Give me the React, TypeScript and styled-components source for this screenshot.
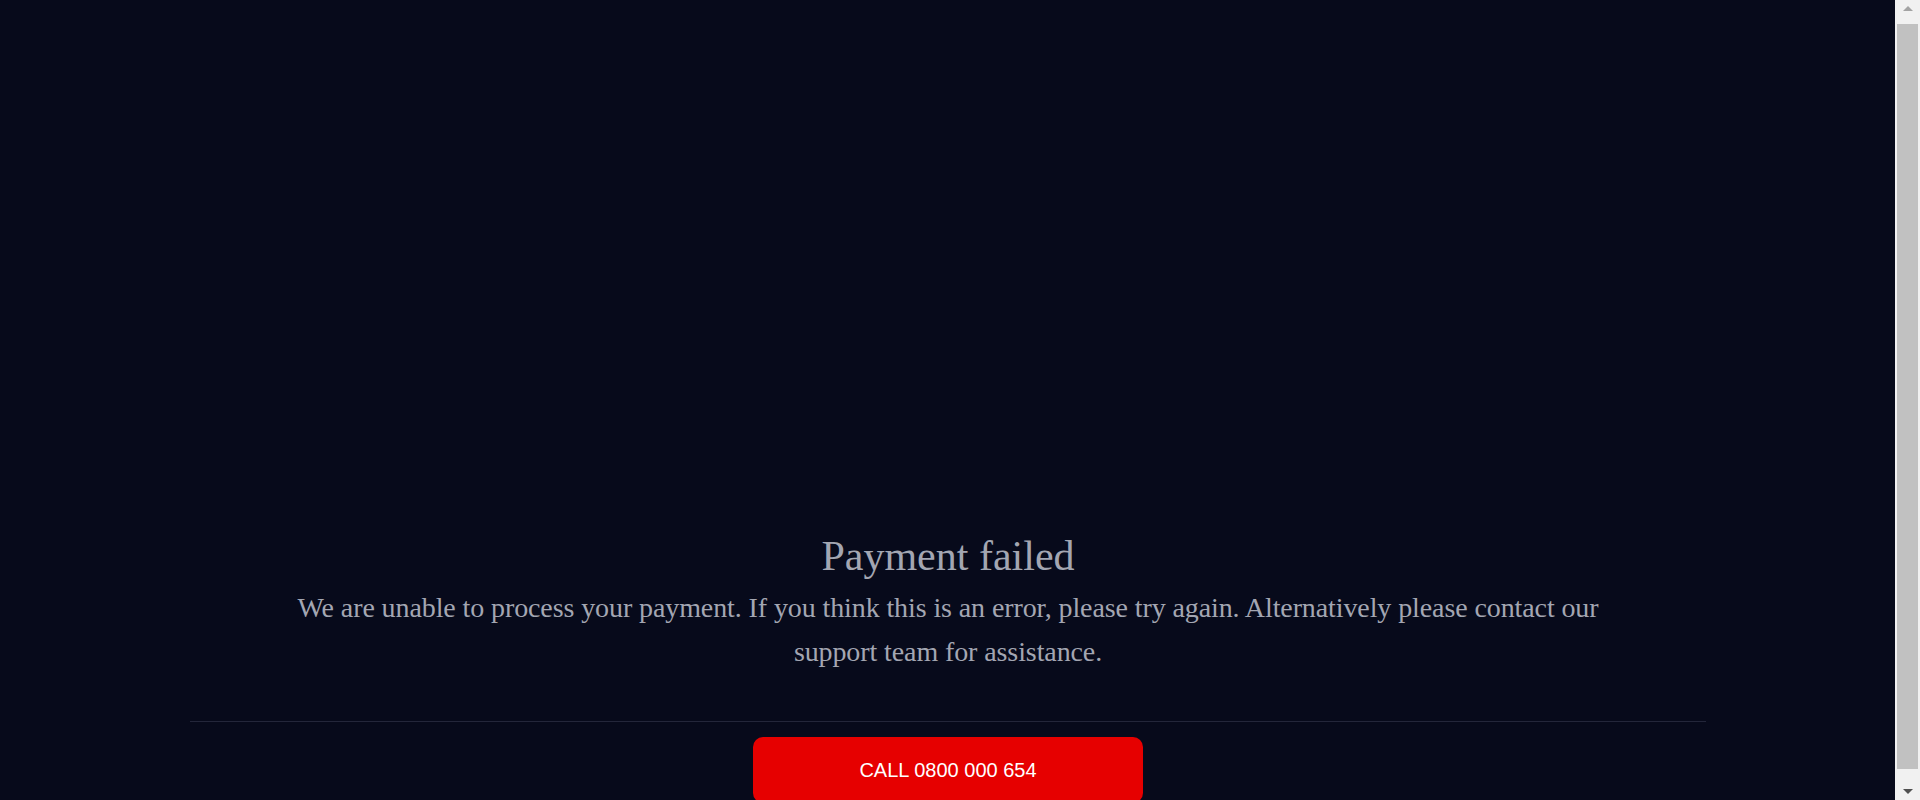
import React from "react";
import styled, { createGlobalStyle } from "styled-components";

const GlobalStyle = createGlobalStyle`
  body {
    margin: 0;
    background: #070a1b;
    font-family: "Liberation Serif", "Times New Roman", serif;
  }
`;

const Page = styled.main`
  padding: 531px 214px 12px 190px;
  display: flex;
  flex-direction: column;
  align-items: center;
`;

const Title = styled.h1`
  margin: 0;
  font-family: "Liberation Serif", serif;
  font-weight: 400;
  font-size: 42px;
  line-height: 50px;
  color: #a3a6b2;
  text-align: center;
`;

const Message = styled.p`
  margin: 5px 0 0;
  width: 1340px;
  font-family: "Liberation Serif", serif;
  font-size: 28px;
  letter-spacing: -0.1px;
  line-height: 44px;
  color: #a3a6b2;
  text-align: center;
`;

const Divider = styled.hr`
  align-self: stretch;
  margin: 47px 0 0;
  border: 0;
  height: 1px;
  background: #23263a;
`;

const CallButton = styled.a`
  margin-top: 15px;
  width: 390px;
  height: 66px;
  display: flex;
  align-items: center;
  justify-content: center;
  background: #e60000;
  border-radius: 10px;
  color: #ffffff;
  font-family: "Liberation Sans", Arial, sans-serif;
  font-size: 20px;
  text-decoration: none;
`;

/* window scrollbar as it appears in the screenshot, drawn over the page edge */
const ScrollbarTrack = styled.div`
  position: fixed;
  top: 0;
  right: 0;
  width: 25px;
  height: 100vh;
  background: #f1f1f1;
  display: flex;
  flex-direction: column;
  align-items: center;
`;

const ScrollArrow = styled.div<{ $down?: boolean }>`
  height: 17px;
  width: 100%;
  display: flex;
  align-items: center;
  justify-content: center;
  &::before {
    content: "";
    width: 0;
    height: 0;
    border-left: 5px solid transparent;
    border-right: 5px solid transparent;
    ${(p) =>
      p.$down
        ? "border-top: 5px solid #505050;"
        : "border-bottom: 5px solid #a3a3a3;"}
  }
`;

const ScrollThumb = styled.div`
  flex: 1;
  width: 21px;
  margin: 7px 0 14px;
  background: #c1c1c1;
`;

export default function App() {
  return (
    <>
      <GlobalStyle />
      <Page>
        <Title>Payment failed</Title>
        <Message>
          We are unable to process your payment. If you think this is an error, please try again. Alternatively please contact our support team for assistance.
        </Message>
        <Divider />
        <CallButton href="#">CALL 0800 000 654</CallButton>
      </Page>
      <ScrollbarTrack aria-hidden="true">
        <ScrollArrow />
        <ScrollThumb />
        <ScrollArrow $down />
      </ScrollbarTrack>
    </>
  );
}
